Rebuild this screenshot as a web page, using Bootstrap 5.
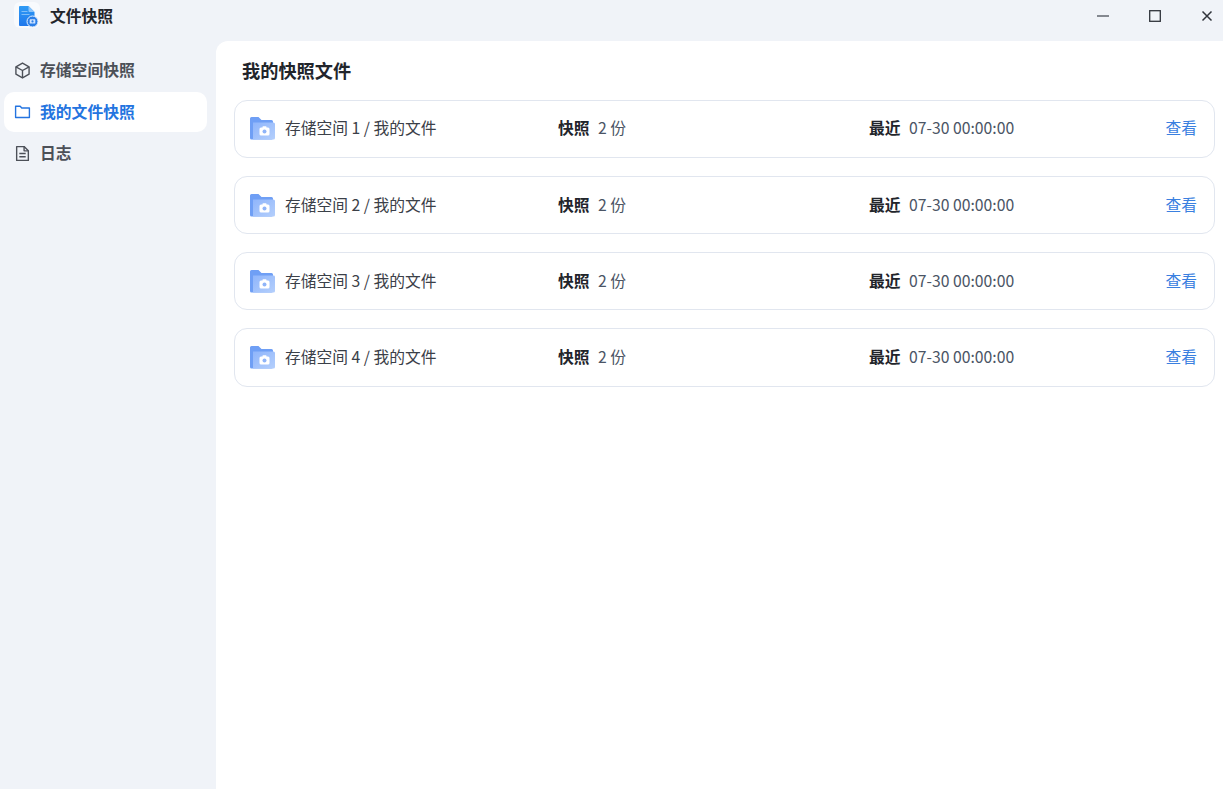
<!DOCTYPE html>
<html lang="zh">
<head>
<meta charset="utf-8">
<title>文件快照</title>
<link rel="stylesheet" href="https://cdn.jsdelivr.net/npm/bootstrap@5.3.0/dist/css/bootstrap.min.css">
<style>
html,body{height:100%;margin:0;overflow:hidden}
body{background:#f0f3f8;font-family:"Noto Sans CJK SC","Noto Sans",sans-serif;font-size:15.75px;color:#41464f}
.shell{height:789px;width:1223px}
.titlebar{height:41px;padding:2px 0 0 14px}
.app-title{font-size:15.75px;line-height:28px;font-weight:700;color:#22252b;margin-left:10px}
.app-logo{display:block}
.win-btns{margin-top:-2px;gap:20px}
.win-btn{width:32px;height:32px;background:none;border:0;padding:0;display:flex;align-items:center;justify-content:center}
.body-row{height:748px}
.side{width:216px;padding:9px 9px 0 4px;flex:none}
.side-item{height:40px;border-radius:10px;padding-left:10px;gap:9px;font-size:15.8px;font-weight:700;color:#4c5058;margin-bottom:1.5px}
.side-item.on{background:#fff;color:#2474e0}
.pane{background:#fff;border-top-left-radius:12px;flex:1;padding:0 8px 0 18px}
.pane-title{font-size:18.200px;font-weight:700;color:#22252b;padding-left:8px;height:58.600px;line-height:58px;margin:0}
.snap{height:58.400px;border:1px solid #e1e6ef;border-radius:13px;margin-bottom:17.800px;padding:0 17px .7px 15px;line-height:56px}
.c-name{width:308px;gap:10px;color:#3b4048}
.c-name svg{margin-top:1px}
.c-count{width:311px;color:#4b5565}
.c-last{flex:1;color:#4b5565}
.lbl{font-weight:700;color:#22252b;margin-right:8.500px}
.see{color:#3a80e0;text-decoration:none}
</style>
</head>
<body>
<div class="shell d-flex flex-column">
  <div class="titlebar d-flex align-items-start">
    <svg class="app-logo" width="26" height="26" viewBox="0 0 26 26">
      <defs><linearGradient id="docg" x1="0" y1="0" x2="0" y2="1"><stop offset="0" stop-color="#2f9bf5"/><stop offset="1" stop-color="#1f77ec"/></linearGradient></defs>
      <rect x="0" y="0" width="26" height="26" rx="6" fill="#f8fafd"/>
      <path d="M6 4h8.500L20.500 10v13a1 1 0 0 1-1 1H6a1 1 0 0 1-1-1V5a1 1 0 0 1 1-1z" fill="url(#docg)"/>
      <path d="M14.500 4l6 6h-5a1 1 0 0 1-1-1z" fill="#8cc4fa"/>
      <path d="M7.500 9.500h6M7.500 12.500h8" stroke="#7fbdf8" stroke-width="1.100"/>
      <circle cx="18.500" cy="19.500" r="5.500" fill="#2b7fe8" stroke="#e8f1fc" stroke-width="1"/>
      <rect x="15.700" y="17.300" width="5.600" height="4.200" rx=".6" fill="#cfe4ff"/>
      <circle cx="18.500" cy="19.400" r="1.100" fill="#2b7fe8"/>
    </svg>
    <span class="app-title">文件快照</span>
    <div class="win-btns ms-auto d-flex">
      <button class="win-btn" aria-label="最小化"><svg width="12" height="12" viewBox="0 0 12 12"><path d="M0 6h12" stroke="#555a63" stroke-width="1.4"/></svg></button>
      <button class="win-btn" aria-label="最大化"><svg width="12" height="12" viewBox="0 0 12 12"><rect x=".7" y=".7" width="10.600" height="10.600" fill="none" stroke="#30343b" stroke-width="1.300"/></svg></button>
      <button class="win-btn" aria-label="关闭"><svg width="12" height="12" viewBox="0 0 12 12"><path d="M1.500 1.500l9 9M10.500 1.500l-9 9" stroke="#30343b" stroke-width="1.500"/></svg></button>
    </div>
  </div>
  <div class="body-row d-flex">
    <nav class="side">
      <div class="side-item d-flex align-items-center">
        <svg width="17" height="17" viewBox="0 0 16 16" fill="none" stroke="#4c5058" stroke-width="1.300" stroke-linejoin="round"><path d="M8 1l6.200 3.500v7L8 15l-6.200-3.500v-7z"/><path d="M1.800 4.500L8 8l6.200-3.500M8 8v7"/></svg>
        <span>存储空间快照</span>
      </div>
      <div class="side-item on d-flex align-items-center">
        <svg width="17" height="17" viewBox="0 0 16 16" fill="none" stroke="#2474e0" stroke-width="1.300" stroke-linejoin="round"><path d="M1.500 3h4.300l1.500 1.700h7.200v9H1.500z"/></svg>
        <span>我的文件快照</span>
      </div>
      <div class="side-item d-flex align-items-center">
        <svg width="17" height="17" viewBox="0 0 16 16" fill="none" stroke="#4c5058" stroke-width="1.300" stroke-linejoin="round"><path d="M2.500 1.500h7l4 4v9h-11z"/><path d="M9.500 1.500v4h4M5 8h6M5 11h6"/></svg>
        <span>日志</span>
      </div>
    </nav>
    <main class="pane">
      <h1 class="pane-title">我的快照文件</h1>
      <div>
        <div class="snap d-flex align-items-center">
          <div class="c-name d-flex align-items-center"><svg width="25" height="23" viewBox="0 0 25 23"><use href="#fld"/></svg><span>存储空间 1 / 我的文件</span></div>
          <div class="c-count"><span class="lbl">快照</span>2 份</div>
          <div class="c-last"><span class="lbl">最近</span>07-30 00:00:00</div>
          <a class="see" href="#">查看</a>
        </div>
        <div class="snap d-flex align-items-center">
          <div class="c-name d-flex align-items-center"><svg width="25" height="23" viewBox="0 0 25 23"><use href="#fld"/></svg><span>存储空间 2 / 我的文件</span></div>
          <div class="c-count"><span class="lbl">快照</span>2 份</div>
          <div class="c-last"><span class="lbl">最近</span>07-30 00:00:00</div>
          <a class="see" href="#">查看</a>
        </div>
        <div class="snap d-flex align-items-center">
          <div class="c-name d-flex align-items-center"><svg width="25" height="23" viewBox="0 0 25 23"><use href="#fld"/></svg><span>存储空间 3 / 我的文件</span></div>
          <div class="c-count"><span class="lbl">快照</span>2 份</div>
          <div class="c-last"><span class="lbl">最近</span>07-30 00:00:00</div>
          <a class="see" href="#">查看</a>
        </div>
        <div class="snap d-flex align-items-center">
          <div class="c-name d-flex align-items-center"><svg width="25" height="23" viewBox="0 0 25 23"><use href="#fld"/></svg><span>存储空间 4 / 我的文件</span></div>
          <div class="c-count"><span class="lbl">快照</span>2 份</div>
          <div class="c-last"><span class="lbl">最近</span>07-30 00:00:00</div>
          <a class="see" href="#">查看</a>
        </div>
      </div>
    </main>
  </div>
</div>
<svg width="0" height="0" class="d-block">
  <defs>
    <linearGradient id="fldf" x1="0" y1="0" x2="1" y2="1"><stop offset="0" stop-color="#8fb5fb"/><stop offset="1" stop-color="#b4cffc"/></linearGradient>
    <g id="fld">
      <path d="M0 1.500A1.500 1.500 0 0 1 1.500 0h7l3 3h10a1.500 1.500 0 0 1 1.500 1.500V21a1.500 1.500 0 0 1-1.500 1.500h-20A1.500 1.500 0 0 1 0 21z" fill="#6f9ff5"/>
      <path d="M3 5.500h20.500a1.500 1.500 0 0 1 1.500 1.500v14a1.500 1.500 0 0 1-1.500 1.500H3z" fill="url(#fldf)"/>
      <rect x="9.500" y="10.500" width="10" height="8" rx="1.500" fill="#fff"/>
      <rect x="12.500" y="9.300" width="4" height="2" rx=".6" fill="#fff"/>
      <circle cx="14.500" cy="14.500" r="2" fill="#8fb4f8"/>
    </g>
  </defs>
</svg>
<script src="https://cdn.jsdelivr.net/npm/bootstrap@5.3.0/dist/js/bootstrap.bundle.min.js"></script>
</body>
</html>
